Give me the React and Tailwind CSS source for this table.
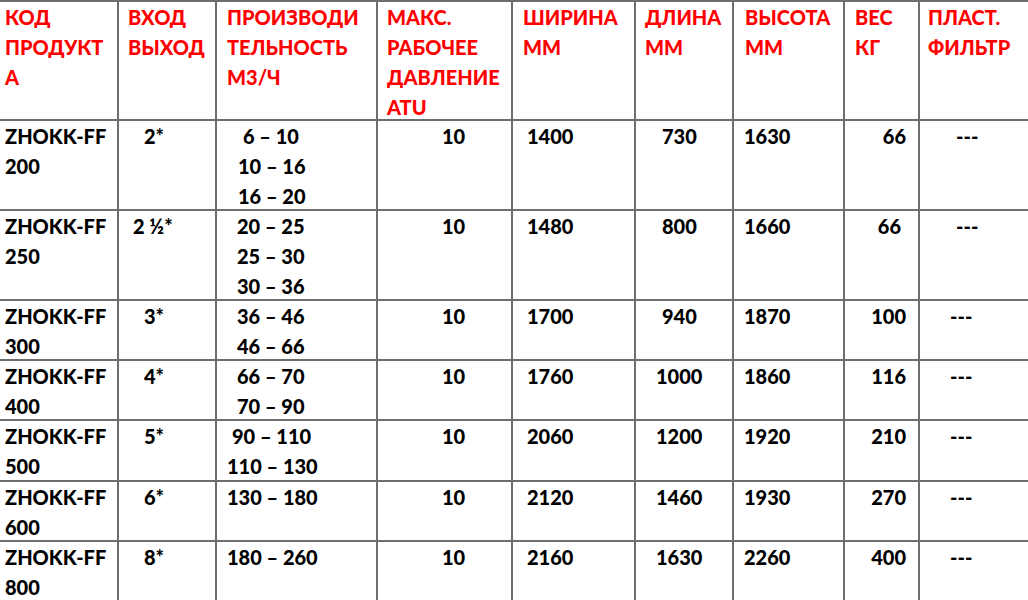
import React from "react";

const cellBase = "border-r-2 border-b-2 border-[#6e6e6e] whitespace-nowrap";

const rows = [
  {
    h: "h-[90px]",
    code: ["ZHOKK-FF", "200"],
    inlet: "2*", inletPl: "pl-[25px]",
    perf: [["6 – 10", "pl-[26px]"], ["10 – 16", "pl-[21px]"], ["16 – 20", "pl-[21px]"]],
    w: "1400", l: "730", lPl: "pl-[26px]", hgt: "1630", kg: "66", dashPl: "pl-[36px]",
  },
  {
    h: "h-[90px]",
    code: ["ZHOKK-FF", "250"],
    inlet: "2 ½*", inletPl: "pl-[14px]",
    perf: [["20 – 25", "pl-[20px]"], ["25 – 30", "pl-[20px]"], ["30 – 36", "pl-[20px]"]],
    w: "1480", l: "800", lPl: "pl-[26px]", hgt: "1660", kg: "66", kgPr: "pr-[17px]", dashPl: "pl-[36px]",
  },
  {
    h: "h-[60px]",
    code: ["ZHOKK-FF", "300"],
    inlet: "3*", inletPl: "pl-[25px]",
    perf: [["36 – 46", "pl-[20px]"], ["46 – 66", "pl-[20px]"]],
    w: "1700", l: "940", lPl: "pl-[26px]", hgt: "1870", kg: "100", dashPl: "pl-[30px]",
  },
  {
    h: "h-[60px]",
    code: ["ZHOKK-FF", "400"],
    inlet: "4*", inletPl: "pl-[25px]",
    perf: [["66 – 70", "pl-[20px]"], ["70 – 90", "pl-[20px]"]],
    w: "1760", l: "1000", lPl: "pl-[20px]", hgt: "1860", kg: "116", dashPl: "pl-[30px]",
  },
  {
    h: "h-[61px]",
    code: ["ZHOKK-FF", "500"],
    inlet: "5*", inletPl: "pl-[25px]",
    perf: [["90 – 110", "pl-[15px]"], ["110 – 130", "pl-[10px]"]],
    w: "2060", l: "1200", lPl: "pl-[20px]", hgt: "1920", kg: "210", dashPl: "pl-[30px]",
  },
  {
    h: "h-[60px]",
    code: ["ZHOKK-FF", "600"],
    inlet: "6*", inletPl: "pl-[25px]",
    perf: [["130 – 180", "pl-[10px]"]],
    w: "2120", l: "1460", lPl: "pl-[20px]", hgt: "1930", kg: "270", dashPl: "pl-[30px]",
  },
  {
    h: "h-[60px]",
    code: ["ZHOKK-FF", "800"],
    inlet: "8*", inletPl: "pl-[25px]",
    perf: [["180 – 260", "pl-[10px]"]],
    w: "2160", l: "1630", lPl: "pl-[20px]", hgt: "2260", kg: "400", dashPl: "pl-[30px]",
  },
];

const headers = [
  { lines: ["КОД", "ПРОДУКТ", "А"], pl: "pl-[5px]" },
  { lines: ["ВХОД", "ВЫХОД"], pl: "pl-[9px]" },
  { lines: ["ПРОИЗВОДИ", "ТЕЛЬНОСТЬ", "М3/Ч"], pl: "pl-[10px]" },
  { lines: ["МАКС.", "РАБОЧЕЕ", "ДАВЛЕНИЕ", "ATU"], pl: "pl-[9px]" },
  { lines: ["ШИРИНА", "ММ"], pl: "pl-[10px]" },
  { lines: ["ДЛИНА", "ММ"], pl: "pl-[9px]" },
  { lines: ["ВЫСОТА", "ММ"], pl: "pl-[11px]" },
  { lines: ["ВЕС", "КГ"], pl: "pl-[10px]" },
  { lines: ["ПЛАСТ.", "ФИЛЬТР"], pl: "pl-[8px]" },
];

export default function App() {
  return (
    <div
      className="w-[1028px] h-[600px] overflow-hidden bg-white text-[20px] leading-[30px] font-black text-black"
      style={{ fontFamily: "Lato, 'Open Sans', 'Noto Sans', sans-serif" }}
    >
      <div className="grid grid-cols-[119px_98px_161px_135px_123px_98px_111px_75px_120px] border-t-2 border-[#6e6e6e] w-[1040px]">
        {headers.map((h, i) => (
          <div key={i} className={`${cellBase} h-[119px] ${h.pl} text-[#ff0000]`}>
            {h.lines.map((t, j) => (
              <div key={j}>{t}</div>
            ))}
          </div>
        ))}
        {rows.map((r, i) => (
          <React.Fragment key={i}>
            <div className={`${cellBase} ${r.h} pl-[5px]`}>
              <div>{r.code[0]}</div>
              <div>{r.code[1]}</div>
            </div>
            <div className={`${cellBase} ${r.h} ${r.inletPl}`}>{r.inlet}</div>
            <div className={`${cellBase} ${r.h}`}>
              {r.perf.map(([t, pl], j) => (
                <div key={j} className={pl}>{t}</div>
              ))}
            </div>
            <div className={`${cellBase} ${r.h} pl-[64px]`}>10</div>
            <div className={`${cellBase} ${r.h} pl-[14px]`}>{r.w}</div>
            <div className={`${cellBase} ${r.h} ${r.lPl}`}>{r.l}</div>
            <div className={`${cellBase} ${r.h} pl-[10px]`}>{r.hgt}</div>
            <div className={`${cellBase} ${r.h} text-right ${r.kgPr || "pr-[12px]"}`}>{r.kg}</div>
            <div className={`${cellBase} ${r.h} ${r.dashPl}`}>---</div>
          </React.Fragment>
        ))}
      </div>
    </div>
  );
}
